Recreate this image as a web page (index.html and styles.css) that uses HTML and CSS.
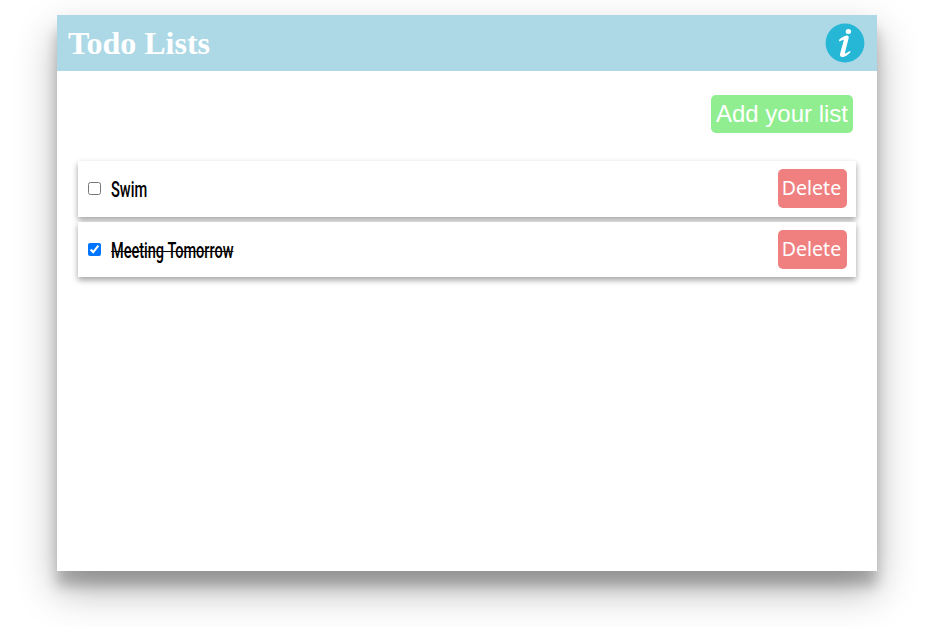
FILE: index.html
```html
<!DOCTYPE html>
<html lang="en">
<head>
<meta charset="utf-8">
<title>Todo Lists</title>
<link rel="stylesheet" href="styles.css">
</head>
<body>
<main class="app">
  <header class="header">
    <h1 class="title">Todo Lists</h1>
    <svg class="info" viewBox="0 0 40 40" aria-label="Info">
      <circle cx="20" cy="20" r="19.4" fill="#26b7d7"/>
      <ellipse cx="23.4" cy="8.5" rx="2.7" ry="2.5" fill="#fff"/>
      <path d="M13.8 17C16.4 14.6 19.5 12.8 21.8 12.6C23.8 12.5 24 14 23.5 15.7L20 29.4C19.6 30.9 20.4 30.8 21.4 30.1L25 27.9L25.7 28.9C23 31.8 19.6 34 17.2 34C15 34 14.7 32.3 15.2 30.3L18.6 17.9C18.9 16.6 18.5 16.4 17.6 16.9L14.5 18.6Z" fill="#fff"/>
    </svg>
  </header>
  <div class="toolbar"><button class="add">Add your list</button></div>
  <ul class="list">
    <li class="item">
      <input class="check" type="checkbox" aria-label="Swim">
      <span class="label"><span class="text swim">Swim</span></span>
      <button class="delete">Delete</button>
    </li>
    <li class="item">
      <input class="check" type="checkbox" checked aria-label="Meeting Tomorrow">
      <span class="label"><span class="text meeting">Meeting Tomorrow</span></span>
      <button class="delete">Delete</button>
    </li>
  </ul>
</main>
</body>
</html>
```
FILE: styles.css
```css
* { box-sizing: border-box; }
body { margin: 0; padding-top: 15px; height: 627px; overflow: hidden; background: #fff; }
.app {
  width: 820px;
  height: 556px;
  margin: 0 auto;
  background: #fff;
  box-shadow: rgba(0,0,0,.3) 0 19px 38px, rgba(0,0,0,.22) 0 15px 12px;
}
.header {
  display: flex;
  align-items: center;
  justify-content: space-between;
  height: 56px;
  padding: 0 12px 0 11px;
  background: lightblue;
}
.title {
  margin: 0;
  color: #fff;
  font: bold 32px/36px "Liberation Serif", serif;
}
.info { width: 40px; height: 40px; }
.toolbar { display: flex; justify-content: flex-end; padding: 24px 24px 0 0; }
.add {
  width: 142px;
  height: 38px;
  padding: 0;
  border: 0;
  border-radius: 5px;
  background: lightgreen;
  color: #fff;
  font: 24px/38px "Liberation Sans", sans-serif;
  white-space: nowrap;
}
.list {
  display: grid;
  gap: 5.6px;
  margin: 28px 21px 0;
  padding: 0;
  list-style: none;
}
.item {
  display: flex;
  align-items: center;
  height: 55.4px;
  padding: 0 9px 0 10px;
  background: #fff;
  box-shadow: rgba(0,0,0,.16) 0 3px 6px, rgba(0,0,0,.23) 0 3px 6px;
}
.item:first-child { height: 55.8px; }
.item:last-child { height: 55px; }
.check { width: 13px; height: 13px; margin: 0 10px 0 0; }
.label { flex: 1; }
.text {
  display: inline-block;
  padding-top: 2px;
  color: #000;
  font: 500 22px/30px Roboto, sans-serif;
  transform-origin: left center;
  white-space: nowrap;
}
.swim { transform: scaleX(.665); }
.meeting { transform: scaleX(.66); text-decoration: line-through 1px; }
.delete {
  width: 69px;
  height: 39px;
  padding: 0 2px 2px 0;
  border: 0;
  border-radius: 5px;
  background: lightcoral;
  color: #fff;
  font: 19.5px/37px "Noto Sans", sans-serif;
}
```
